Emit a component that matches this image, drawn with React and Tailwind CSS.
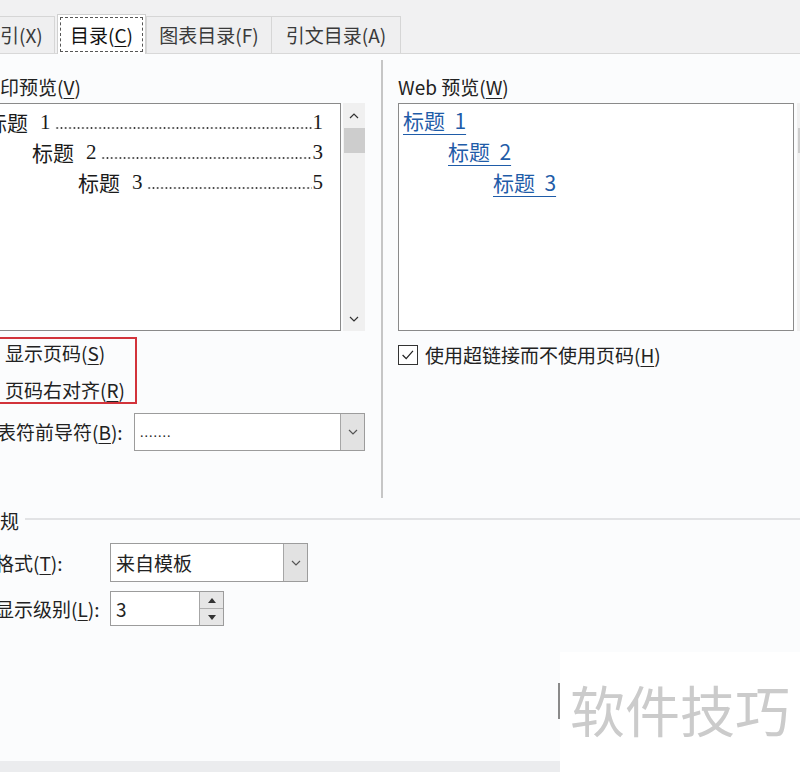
import React from 'react';

function U({ children }) {
  return <span className="underline underline-offset-[3px] decoration-1">{children}</span>;
}

function Chevron({ up = false, className = '' }) {
  return (
    <svg viewBox="0 0 10 6" className={className} fill="none" stroke="currentColor" strokeWidth="1.2">
      {up ? <polyline points="1,5 5,1 9,5" /> : <polyline points="1,1 5,5 9,1" />}
    </svg>
  );
}

function Select({ value, size, valueClass = '' }) {
  return (
    <div className={`flex shrink-0 border border-[#9c9c9c] bg-white ${size}`}>
      <div className={`flex-1 flex items-center pl-[5px] text-[#222] ${valueClass}`}>{value}</div>
      <div className="w-[24px] bg-[#e2e2e2] border-l border-[#a6a6a6] flex items-center justify-center text-[#555]">
        <Chevron className="w-[10px] h-[6px]" />
      </div>
    </div>
  );
}

function Scrollbar({ className = '' }) {
  return (
    <div className={`w-[22px] shrink-0 bg-[#f0f0f0] flex flex-col items-center ${className}`}>
      <div className="h-[25px] flex items-center justify-center text-[#333]">
        <Chevron up className="w-[10px] h-[6px]" />
      </div>
      <div className="w-[21px] h-[25px] bg-[#cdcdcd]" />
      <div className="flex-1" />
      <div className="h-[25px] flex items-center justify-center text-[#333]">
        <Chevron className="w-[10px] h-[6px]" />
      </div>
    </div>
  );
}

export default function App() {
  const tocRows = [
    { num: '1', page: '1', pad: 'pl-[15px]' },
    { num: '2', page: '3', pad: 'pl-[61px]' },
    { num: '3', page: '5', pad: 'pl-[107px]' },
  ];

  const webRows = [
    { text: '标题  1', pad: 'pl-[4px]' },
    { text: '标题  2', pad: 'pl-[49px]' },
    { text: '标题  3', pad: 'pl-[94px]' },
  ];

  return (
    <div className="relative w-[800px] h-[772px] overflow-hidden bg-[#fbfcfd] flex flex-col text-[19px] leading-[24px] text-[#222] font-['Noto_Sans_CJK_SC','Microsoft_YaHei',sans-serif]">
      {/* Tabs */}
      <div className="h-[54px] shrink-0 bg-[#f1f1f2] border-b border-[#d8d8d8] flex items-end">
        <div className="ml-[-30px] flex items-end text-[#3a3a3a]">
          <div className="h-[37px] w-[85px] pl-[10px] bg-[#efeff0] border border-b-0 border-[#d6d6d6] flex items-center">
            索引(X)
          </div>
          <div className="relative z-10 ml-[2px] mb-[-1px] h-[40px] w-[89px] bg-white border border-b-0 border-[#d0d0d0] p-[2px]">
            <div className="h-full border border-dashed border-[#555] flex items-center justify-center text-[#111]">
              目录(<U>C</U>)
            </div>
          </div>
          <div className="h-[37px] w-[126px] bg-[#efeff0] border border-b-0 border-[#d6d6d6] flex items-center justify-center">
            图表目录(F)
          </div>
          <div className="h-[37px] w-[129px] bg-[#efeff0] border border-b-0 border-l-0 border-[#d6d6d6] flex items-center justify-center">
            引文目录(A)
          </div>
        </div>
      </div>

      {/* Main */}
      <div className="flex-1 ml-[-30px] w-[880px] flex flex-col">
        <div className="flex h-[444px]">
          {/* Left: print preview */}
          <div className="w-[411px] shrink-0 flex flex-col pt-[21px]">
            <div className="pl-[11px] h-[24px]">打印预览(<U>V</U>)</div>
            <div className="flex mt-[4px] h-[228px]">
              <div className="w-[371px] border border-[#8a8a8a] bg-white pt-[3px] pr-[17px] font-['Liberation_Serif','Noto_Sans_CJK_SC',serif] text-[#1a1a1a]">
                {tocRows.map((r) => (
                  <div key={r.num} className={`flex items-center h-[30px] leading-[30px] text-[21px] ${r.pad}`}>
                    <span className="font-['Noto_Sans_CJK_SC',sans-serif]">标题</span>
                    <span className="ml-[12px]">{r.num}</span>
                    <span className="flex-1 self-end mb-[8px] ml-[4px] mr-[1px] h-[2px] bg-[radial-gradient(circle,#3a3a3a_0.8px,transparent_1.1px)] bg-[length:4.3px_2px] bg-repeat-x" />
                    <span>{r.page}</span>
                  </div>
                ))}
              </div>
              <Scrollbar className="ml-[2px]" />
            </div>

            <div className="mt-[6px] w-[167px] h-[67px] border-2 border-[#d2333b] pl-[33px] pt-[2px]">
              <div className="h-[24px]">显示页码(<U>S</U>)</div>
              <div className="h-[24px] mt-[13px]">页码右对齐(<U>R</U>)</div>
            </div>

            <div className="mt-[9px] flex items-center">
              <div className="w-[164px] pl-[8px] whitespace-nowrap">制表符前导符(<U>B</U>):</div>
              <Select
                size="w-[231px] h-[38px]"
                value="......."
                valueClass="font-['Liberation_Serif',serif] text-[14px] tracking-[1px] pt-[2px]"
              />
            </div>
          </div>

          {/* Separator */}
          <div className="w-[2px] shrink-0 mt-[6px] h-[438px] bg-[#c6c6c6]" />

          {/* Right: web preview */}
          <div className="w-[447px] shrink-0 flex flex-col pt-[21px] pl-[15px]">
            <div className="h-[24px]">Web 预览(<U>W</U>)</div>
            <div className="flex mt-[4px] h-[228px]">
              <div className="w-[396px] shrink-0 border border-[#8a8a8a] bg-white pt-[1px]">
                {webRows.map((r) => (
                  <div key={r.text} className={`h-[31px] leading-[31px] text-[21px] ${r.pad}`}>
                    <span className="whitespace-pre text-[#1f5ca8] underline underline-offset-[5px] decoration-1">
                      {r.text}
                    </span>
                  </div>
                ))}
              </div>
              <Scrollbar className="ml-[3px]" />
            </div>
            <div className="mt-[12px] flex items-center">
              <div className="w-[20px] h-[20px] border border-[#333] bg-white flex items-center justify-center">
                <svg viewBox="0 0 20 20" className="w-[18px] h-[18px]" fill="none" stroke="#222" strokeWidth="1.4">
                  <polyline points="4,10 8,14 15.5,5.5" />
                </svg>
              </div>
              <div className="ml-[7px]">使用超链接而不使用页码(<U>H</U>)</div>
            </div>
          </div>
        </div>

        {/* General */}
        <div className="mt-[11px] flex items-center h-[24px]">
          <div className="pl-[11px]">常规</div>
          <div className="flex-1 ml-[6px] h-[2px] bg-[#e2e3e5] mb-[5px]" />
        </div>

        <div className="mt-[10px] flex items-center">
          <div className="w-[140px] pl-[25px]">格式(<U>T</U>):</div>
          <Select size="w-[198px] h-[39px]" value="来自模板" />
        </div>

        <div className="mt-[9px] flex items-center">
          <div className="w-[140px] pl-[25px]">显示级别(<U>L</U>):</div>
          <div className="flex w-[114px] h-[35px] border border-[#9c9c9c] bg-white">
            <div className="flex-1 pl-[5px] flex items-center">3</div>
            <div className="w-[24px] flex flex-col border-l border-[#a6a6a6]">
              <div className="flex-1 bg-[#e6e6e6] border-b border-[#b0b0b0] flex items-center justify-center">
                <svg viewBox="0 0 8 5" className="w-[8px] h-[5px]" fill="#333">
                  <polygon points="0,5 4,0 8,5" />
                </svg>
              </div>
              <div className="flex-1 bg-[#e6e6e6] flex items-center justify-center">
                <svg viewBox="0 0 8 5" className="w-[8px] h-[5px]" fill="#333">
                  <polygon points="0,0 8,0 4,5" />
                </svg>
              </div>
            </div>
          </div>
        </div>
      </div>

      {/* Bottom strip */}
      <div className="h-[11px] shrink-0 bg-[#ebecee]" />

      {/* Watermark */}
      <div className="absolute left-[558px] top-[683px] w-[2px] h-[36px] bg-[#8a8a8a]" />
      <div className="absolute left-[560px] top-[652px] right-0 bottom-0 bg-white pl-[10px] pt-[27px]">
        <div className="text-[55px] leading-[58px] text-[#cbcbcb] whitespace-nowrap">软件技巧</div>
      </div>
    </div>
  );
}
